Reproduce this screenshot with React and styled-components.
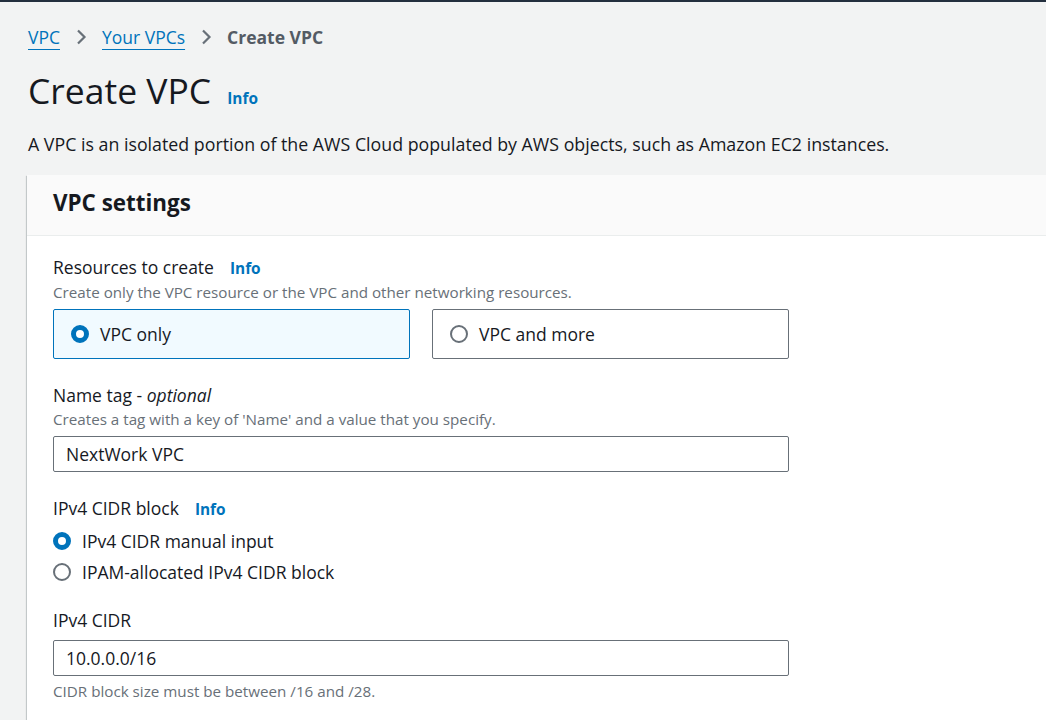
import React, { useState } from "react";
import styled, { createGlobalStyle } from "styled-components";

const GlobalStyle = createGlobalStyle`
  html, body {
    margin: 0;
    padding: 0;
    background: #f2f3f3;
    overflow: hidden;
  }
  body {
    font-family: "Open Sans", "Noto Sans", sans-serif;
    color: #16191f;
  }
`;

const TopBar = styled.div`
  height: 2px;
  background: #232f3e;
`;

const Page = styled.div`
  padding: 20px 0 0 28px;
  width: 1100px;
`;

const Crumbs = styled.nav`
  display: flex;
  align-items: center;
  gap: 15px;
  font-size: 17.5px;
  height: 30px;
`;

const CrumbLink = styled.a`
  color: #0073bb;
  text-decoration: underline;
  text-underline-offset: 5px;
  text-decoration-thickness: 1px;
`;

const CrumbCurrent = styled.span`
  color: #545b64;
  font-weight: 700;
`;

const Chevron = () => (
  <svg width="12" height="18" viewBox="0 0 12 18">
    <path d="M3 2.5l6.5 6.5L3 15.5" fill="none" stroke="#687078" strokeWidth="2.2" />
  </svg>
);

const TitleRow = styled.div`
  display: flex;
  align-items: baseline;
  gap: 16px;
  margin-top: 14px;
`;

const Title = styled.h1`
  margin: 0;
  font-size: 35.5px;
  font-weight: 400;
  line-height: 48px;
`;

const InfoLink = styled.a`
  color: #0073bb;
  font-weight: 700;
  font-size: 15.4px;
  margin-left: ${(p) => p.gap || 0}px;
`;

const Lead = styled.p`
  margin: 17px 0 0;
  font-size: 17.8px;
  line-height: 26px;
`;

const Card = styled.section`
  margin-top: 18px;
  margin-left: -1px;
  background: #fff;
  box-shadow: 0 1px 1px 0 rgba(0, 28, 36, 0.3), 1px 1px 1px 0 rgba(0, 28, 36, 0.15),
    -1px 1px 1px 0 rgba(0, 28, 36, 0.15);
`;

const CardHeader = styled.header`
  background: #fafafa;
  border-bottom: 1px solid #eaeded;
  padding: 12px 26px 16px;
  font-size: 22.4px;
  font-weight: 700;
  line-height: 32px;
`;

const CardBody = styled.div`
  padding: 19px 26px 24px;
  width: 736px;
  display: flex;
  flex-direction: column;
  gap: 24px;
`;

const Field = styled.div`
  display: flex;
  flex-direction: column;
`;

const Label = styled.div`
  font-size: 17.5px;
  line-height: 24px;
  display: flex;
  align-items: baseline;
  em {
    font-style: italic;
  }
`;

const Hint = styled.div`
  font-size: 15.2px;
  line-height: 22px;
  color: #687078;
  margin-top: ${(p) => p.top || 0}px;
`;

const Tiles = styled.div`
  display: grid;
  grid-template-columns: 1fr 1fr;
  gap: 22px;
  margin-top: 6px;
`;

const Tile = styled.label`
  display: flex;
  align-items: center;
  gap: 11px;
  height: 50px;
  box-sizing: border-box;
  padding: 0 17px;
  border-radius: 2px;
  border: 1px solid ${(p) => (p.selected ? "#0073bb" : "#687078")};
  background: ${(p) => (p.selected ? "#f1faff" : "#fff")};
  font-size: 17.5px;
  cursor: pointer;
`;

const RadioDot = styled.span`
  width: 18px;
  height: 18px;
  box-sizing: border-box;
  border-radius: 50%;
  flex: none;
  border: ${(p) => (p.checked ? "5px solid #0073bb" : "2px solid #687078")};
  background: #fff;
`;

const RadioList = styled.div`
  display: flex;
  flex-direction: column;
  gap: 7px;
  margin-top: 7px;
`;

const RadioRow = styled.label`
  display: flex;
  align-items: center;
  gap: 11px;
  font-size: 17.5px;
  line-height: 24px;
  cursor: pointer;
`;

const Input = styled.input`
  margin-top: ${(p) => p.top || 6}px;
  height: 36px;
  box-sizing: border-box;
  border: 1px solid #687078;
  border-radius: 2px;
  padding: 0 12px;
  font-family: inherit;
  font-size: 17.5px;
  color: #16191f;
  background: #fff;
  outline: none;
`;

export default function App() {
  const [resource, setResource] = useState("only");
  const [cidr, setCidr] = useState("manual");
  const [name, setName] = useState("NextWork VPC");
  const [block, setBlock] = useState("10.0.0.0/16");

  return (
    <>
      <GlobalStyle />
      <TopBar />
      <Page>
        <Crumbs>
          <CrumbLink>VPC</CrumbLink>
          <Chevron />
          <CrumbLink>Your VPCs</CrumbLink>
          <Chevron />
          <CrumbCurrent>Create VPC</CrumbCurrent>
        </Crumbs>
        <TitleRow>
          <Title>Create VPC</Title>
          <InfoLink>Info</InfoLink>
        </TitleRow>
        <Lead>
          A VPC is an isolated portion of the AWS Cloud populated by AWS objects, such as Amazon EC2
          instances.
        </Lead>
        <Card>
          <CardHeader>VPC settings</CardHeader>
          <CardBody>
            <Field>
              <Label>
                Resources to create <InfoLink gap={16}>Info</InfoLink>
              </Label>
              <Hint>Create only the VPC resource or the VPC and other networking resources.</Hint>
              <Tiles>
                <Tile selected={resource === "only"} onClick={() => setResource("only")}>
                  <RadioDot checked={resource === "only"} />
                  VPC only
                </Tile>
                <Tile selected={resource === "more"} onClick={() => setResource("more")}>
                  <RadioDot checked={resource === "more"} />
                  VPC and more
                </Tile>
              </Tiles>
            </Field>
            <Field>
              <Label>
                Name tag -&nbsp;<em>optional</em>
              </Label>
              <Hint top={1}>Creates a tag with a key of 'Name' and a value that you specify.</Hint>
              <Input value={name} onChange={(e) => setName(e.target.value)} />
            </Field>
            <Field>
              <Label>
                IPv4 CIDR block <InfoLink gap={16}>Info</InfoLink>
              </Label>
              <RadioList>
                <RadioRow onClick={() => setCidr("manual")}>
                  <RadioDot checked={cidr === "manual"} />
                  IPv4 CIDR manual input
                </RadioRow>
                <RadioRow onClick={() => setCidr("ipam")}>
                  <RadioDot checked={cidr === "ipam"} />
                  IPAM-allocated IPv4 CIDR block
                </RadioRow>
              </RadioList>
            </Field>
            <Field>
              <Label>IPv4 CIDR</Label>
              <Input top={8} value={block} onChange={(e) => setBlock(e.target.value)} />
              <Hint top={4}>CIDR block size must be between /16 and /28.</Hint>
            </Field>
          </CardBody>
        </Card>
      </Page>
    </>
  );
}
